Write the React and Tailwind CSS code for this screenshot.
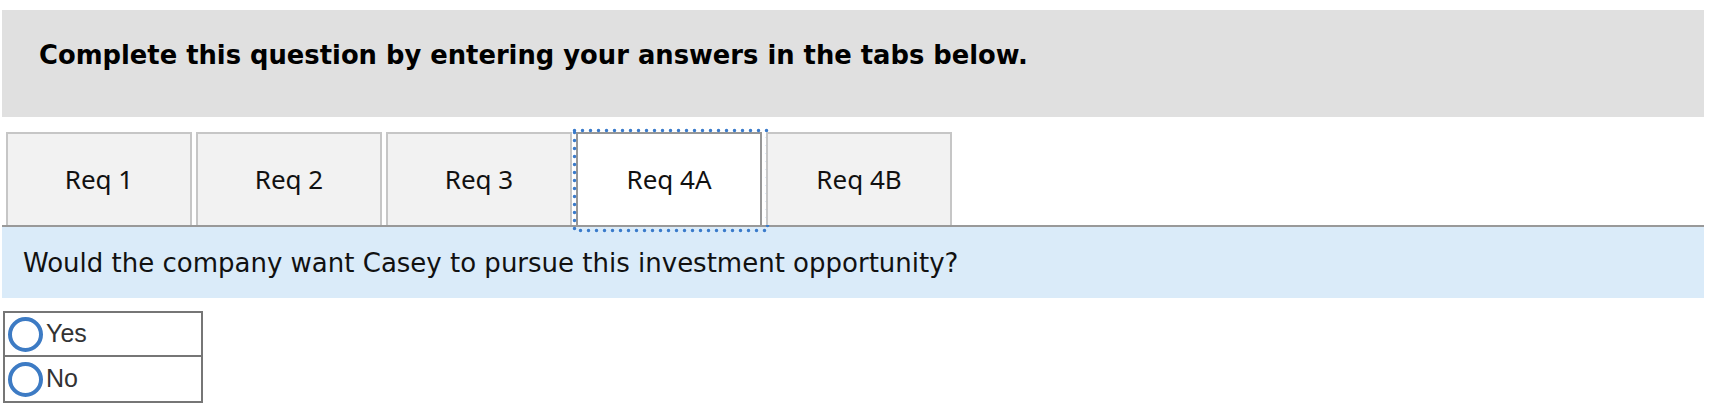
import React from "react";

const tabs = [
  { label: "Req 1" },
  { label: "Req 2" },
  { label: "Req 3" },
  { label: "Req 4A", active: true },
  { label: "Req 4B" },
];

function FocusRing() {
  return (
    <svg
      className="absolute left-[-5px] top-[-5px] pointer-events-none overflow-visible"
      width="196"
      height="103"
      viewBox="0 0 196 103"
    >
      <rect
        x="1.5"
        y="1.5"
        width="193"
        height="100"
        fill="none"
        stroke="#3a7bcb"
        strokeWidth="3.5"
        strokeDasharray="0 8"
        strokeLinecap="round"
      />
    </svg>
  );
}

function Radio({ label, last }) {
  return (
    <div
      className={
        "flex items-center h-[44px] pl-[3px] " +
        (last ? "" : "border-b-2 border-[#767676]")
      }
    >
      <span className="block w-[35px] h-[35px] rounded-full border-[4px] border-[#3d7bc4] bg-white shrink-0" />
      <span
        className="ml-[3px] text-[25px] text-[#333]"
        style={{ fontFamily: '"Liberation Sans", Arial, sans-serif' }}
      >
        {label}
      </span>
    </div>
  );
}

export default function App() {
  return (
    <div className="w-[1717px] h-[410px] bg-white overflow-hidden">
      <div className="pt-[10px] pl-[2px] w-[1704px]">
        <div className="h-[107px] bg-[#e0e0e0] pl-[37px] pt-[30px]">
          <p
            className="text-[25.8px] leading-[30px] font-bold text-black"
            style={{ fontFamily: '"DejaVu Sans", Verdana, sans-serif' }}
          >
            Complete this question by entering your answers in the tabs below.
          </p>
        </div>

        <div className="mt-[15px] flex gap-[4px] pl-[4px] h-[93px]">
          {tabs.map((t) => (
            <div
              key={t.label}
              className={
                "relative w-[186px] h-[93px] flex items-center justify-center border-2 border-b-0 text-[26px] " +
                (t.active
                  ? "bg-white border-[#979797] text-[#111]"
                  : "bg-[#f2f2f2] border-[#c6c6c6] text-[#111]")
              }
              style={{ fontFamily: '"Noto Sans", "Open Sans", sans-serif' }}
            >
              {t.label}
              {t.active && <FocusRing />}
            </div>
          ))}
        </div>

        <div className="h-[2px] bg-[#999999]" />

        <div className="h-[71px] bg-[#daebf9] flex items-center pl-[21px]">
          <p
            className="text-[26px] leading-[30px] text-[#111]"
            style={{ fontFamily: '"DejaVu Sans", Verdana, sans-serif' }}
          >
            Would the company want Casey to pursue this investment opportunity?
          </p>
        </div>

        <div className="mt-[13px] ml-[1px] w-[200px] border-2 border-[#767676]">
          <Radio label="Yes" />
          <Radio label="No" last />
        </div>
      </div>
    </div>
  );
}
